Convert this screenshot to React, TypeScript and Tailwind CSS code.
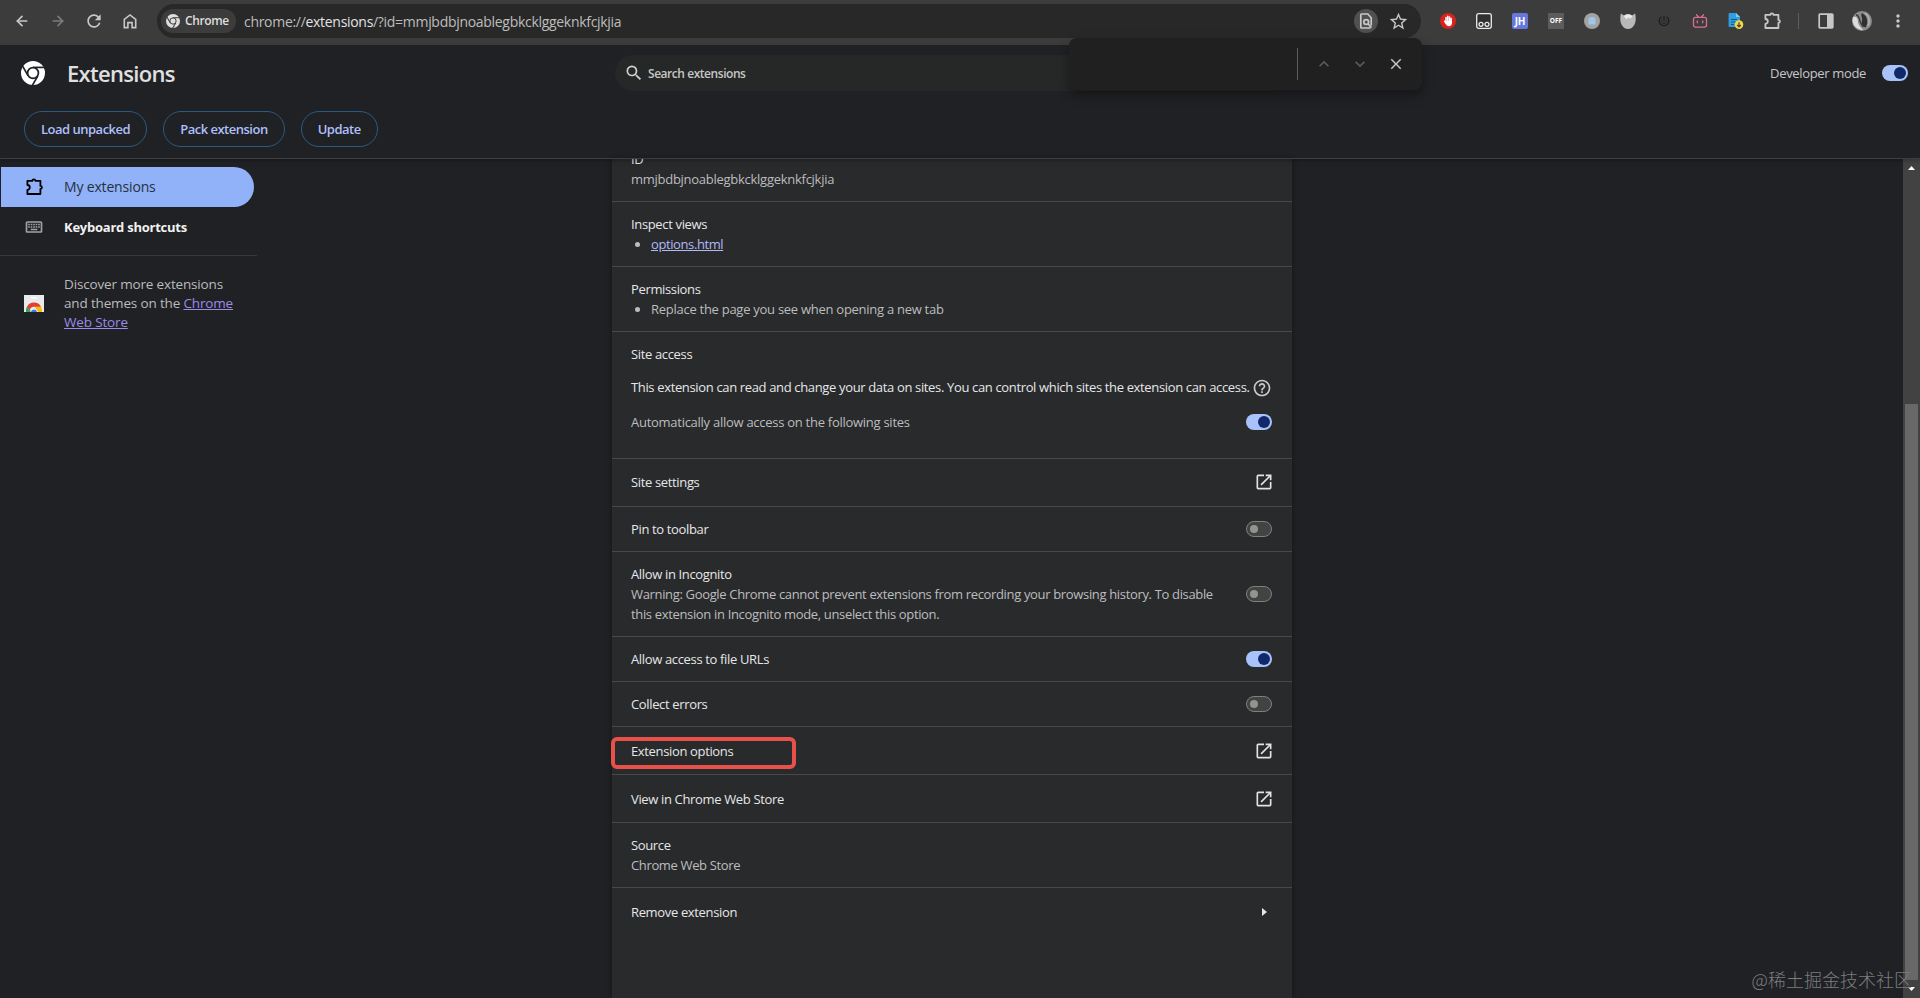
import type { ReactNode } from "react"
import { ArrowLeft, ArrowRight } from "lucide-react"
import {
  MdClose,
  MdHelpOutline,
  MdKeyboardArrowDown,
  MdKeyboardArrowUp,
  MdMoreVert,
  MdOpenInNew,
  MdOutlineKeyboard,
  MdRefresh,
  MdSearch,
  MdStarBorder,
} from "react-icons/md"

// the text colour fills the blades, `gap` is the colour showing between them
function ChromeLogo({ className, gap }: { className: string; gap: string }) {
  return (
    <svg viewBox="0 0 24 24" className={className} fill="none" stroke={gap} strokeWidth="1.7">
      <circle cx="12" cy="12" r="12" fill="currentColor" stroke="none" />
      <path d="M12 6.4H24" />
      <path d="M12 6.4H24" transform="rotate(120 12 12)" />
      <path d="M12 6.4H24" transform="rotate(240 12 12)" />
      <circle cx="12" cy="12" r="5.4" fill="currentColor" />
    </svg>
  )
}

function Toggle({ on = false }: { on?: boolean }) {
  if (on) {
    return (
      <span className="flex h-4 w-[26px] shrink-0 items-center justify-end rounded-full bg-[#a8c3fa] pr-0.5">
        <span className="size-3 rounded-full bg-[#11296b]" />
      </span>
    )
  }
  return (
    <span className="flex h-4 w-[26px] shrink-0 items-center rounded-full border border-[#7e807e] bg-[#424442] pl-[3px]">
      <span className="size-2 rounded-full bg-[#929492]" />
    </span>
  )
}

function PuzzleIcon({ className }: { className?: string }) {
  return (
    <svg viewBox="0 0 20 20" className={className} fill="none" stroke="currentColor" strokeWidth="1.8" strokeLinejoin="round">
      <path d="M3.4 3.8H8.4a1.5 1.5 0 0 1 3 0H16.4V8.9a1.5 1.5 0 0 1 0 3V17H3.4V12.8a2.4 2.4 0 0 0 0-4.8Z" />
    </svg>
  )
}

function HomeIcon() {
  return (
    <svg viewBox="0 0 20 20" className="size-5" fill="none" stroke="currentColor" strokeWidth="1.6">
      <path d="M4.3 8.4 10 3.9l5.7 4.5v8.2h-3.6v-5H7.9v5H4.3Z" />
    </svg>
  )
}

function FindPageIcon() {
  return (
    <svg viewBox="0 0 20 20" className="size-5" fill="none" stroke="currentColor" strokeWidth="1.7">
      <path d="M15.2 14.6V6.8L11.8 3H5.6a.8.8 0 0 0-.8.8v12.4c0 .5.3.8.8.8h9" />
      <circle cx="10.2" cy="11" r="2.4" />
      <path d="m12 12.8 3.4 3.8" />
    </svg>
  )
}

function WebStoreIcon() {
  return (
    <svg viewBox="0 0 20 17" className="h-[17px] w-5 shrink-0">
      <rect width="20" height="17" fill="#e8eaed" />
      <rect x="7" y="2" width="6" height="1.4" rx=".7" fill="#fff" />
      <path d="M2 17a8 8 0 0 1 1.4-6L7.5 17Z" fill="#34a853" />
      <path d="M18 17a8 8 0 0 0-1.2-5.4H10.5L14 17Z" fill="#fbbc04" />
      <path d="M3 11.7a8 8 0 0 1 14 0H10a4.5 4.5 0 0 0-4.3 3.6Z" fill="#e2412f" />
      <path d="M6.2 17a3.9 3.9 0 0 1 7.6 0Z" fill="#fff" />
      <path d="M6.9 17a3.2 3.2 0 0 1 6.2 0Z" fill="#3b78e7" />
    </svg>
  )
}

function ExtensionIcons() {
  return (
    <div className="flex items-center gap-5 text-[#c7c7c7]">
      <svg viewBox="0 0 16 16" className="size-4">
        <circle cx="8" cy="8" r="8" fill="#d8221c" />
        <path d="M6 8.5V4.4M7.8 8V3.2M9.6 8V4M11.2 9V5.6M6 10 4.6 8.2" stroke="#fff" strokeWidth="1.5" strokeLinecap="round" />
        <path d="M5.2 8H12v2c0 2-1.3 3.2-3 3.2-2 0-3-1.4-3.8-3.2Z" fill="#fff" />
      </svg>
      <svg viewBox="0 0 16 16" className="size-4" fill="#303030" stroke="#ececec" strokeWidth="1.3">
        <rect x=".7" y=".7" width="14.6" height="14.6" rx="2" />
        <circle cx="5" cy="11.3" r="2" />
        <circle cx="11" cy="11.3" r="2" />
      </svg>
      <span className="flex size-4 items-center justify-center rounded-[2px] bg-[#6677dd] text-[10px] font-bold tracking-[-0.2px] text-white">JH</span>
      <span className="flex size-4 items-center justify-center bg-[#5c5c5c] text-[6.5px] font-bold text-white">OFF</span>
      <svg viewBox="0 0 16 16" className="size-4">
        <circle cx="8" cy="8" r="8" fill="#a3a3a3" />
        <path d="M4.5 5.5 8 3.8l3.5 1.7V11.5h-7Z" fill="#9cc8ec" />
      </svg>
      <svg viewBox="0 0 16 16" className="size-4">
        <path d="M.8.5 4 2.4C6.5.8 9.5.8 12 2.4L15.2.5C16 5 16 8.5 14.5 11.5 13 14.5 10.5 16 8 16s-5-1.5-6.5-4.5C0 8.500 0 5 .8.5Z" fill="#b9b9b9" />
        <path d="M4 3.5C5 .8 10.5.4 12.5 3.5L10.5 5.5 8.5 4.4 6.5 6.2Z" fill="#e9e9e9" />
      </svg>
      <svg viewBox="0 0 16 16" className="size-4" fill="none" stroke="#1b1b1b" strokeWidth="1.2" strokeLinecap="round">
        <path d="M5 4.2a4.8 4.8 0 1 0 6 0M8 3V7" />
        <path d="M6 7.5a2.2 2.2 0 1 0 4 0" strokeWidth=".7" />
      </svg>
      <svg viewBox="0 0 16 16" className="size-4" fill="none" stroke="#dd6c94" strokeWidth="1.3" strokeLinecap="round">
        <rect x="1.5" y="4.3" width="13" height="9.8" rx="2" />
        <path d="M4.5 1.8 6.5 4M11.5 1.8 9.5 4M5.3 8v1.8M10.7 8v1.8" />
      </svg>
      <svg viewBox="0 0 16 16" className="size-4 overflow-visible">
        <path d="M1.6 0H8l4 4v10H1.6A1 1 0 0 1 .6 13V1a1 1 0 0 1 1-1Z" fill="#2f9fe0" />
        <path d="M8 0l4 4H8Z" fill="#82cbf3" />
        <path d="M3 6.5h6M3 9h5M3 11.5h3" stroke="#17568c" />
        <circle cx="11" cy="11.6" r="4.3" fill="#f0d848" />
        <path d="M11 9.2v4.4M9.2 12l1.8 1.8 1.8-1.8" fill="none" stroke="#4a4420" strokeWidth="1.2" />
      </svg>
    </div>
  )
}

function BrowserToolbar() {
  return (
    <div className="flex h-[45px] items-start bg-[#3c3c3c] text-[#c7c7c7]">
      <div className="flex h-[42px] w-[157px] shrink-0 items-center gap-4 pl-3">
        <ArrowLeft className="size-5 p-[2px]" strokeWidth={2.6} />
        <ArrowRight className="size-5 p-[2px] text-[#7c7c7c]" strokeWidth={2.6} />
        <MdRefresh className="size-5" />
        <HomeIcon />
      </div>
      <div className="mt-1 flex h-[34px] w-[1264px] shrink-0 items-center rounded-full bg-[#282828] pr-3 pl-1">
        <div className="flex h-6 w-[75px] items-center gap-[5px] rounded-full bg-[#3c3c3c] pl-[5px]">
          <ChromeLogo className="size-3.5 text-[#dedede]" gap="#3c3c3c" />
          <span className="text-xs font-semibold tracking-[-0.4px] text-[#dedede]">Chrome</span>
        </div>
        <span className="ml-2 flex-1 text-[14px] tracking-[-0.3px] text-[#bdbdbd]">
          chrome://<span className="text-[#e3e3e3]">extensions</span>/?id=mmjbdbjnoablegbkcklggeknkfcjkjia
        </span>
        <span className="mr-[10px] flex size-6 items-center justify-center rounded-full bg-[#505050]">
          <FindPageIcon />
        </span>
        <MdStarBorder className="size-[21px]" />
      </div>
      <div className="flex h-[42px] items-center pl-[19px]">
        <ExtensionIcons />
        <PuzzleIcon className="ml-[18px] size-5" />
        <span className="ml-4 h-4 w-px bg-[#5e5e5e]" />
        <svg viewBox="0 0 16 16" className="ml-[19px] size-4">
          <rect x="1.2" y="1.2" width="13.6" height="13.6" rx=".8" fill="none" stroke="currentColor" strokeWidth="1.7" />
          <path d="M9 1h6v14H9Z" fill="currentColor" />
        </svg>
        <svg viewBox="0 0 20 20" className="ml-[18px] size-5">
          <circle cx="10" cy="10" r="10" fill="#8c8c8c" />
          <path d="M10 2a10 10 0 0 1 4 14C12 17 9 14 10 10S8 5 10 2Z" fill="#2f2f2f" />
          <path d="M1 6c4-1 5 2 5 5s3 5 5 8A10 10 0 0 1 1 6Z" fill="#dcdcdc" />
          <path d="M4 4c3 0 3 3 4 6s2 4 3 6" stroke="#3a3a3a" strokeWidth="1.4" fill="none" />
          <path d="M13 2c4 3 5 8 3 13" stroke="#b4b4b4" strokeWidth="1.5" fill="none" />
        </svg>
        <MdMoreVert className="ml-4 size-5" />
      </div>
    </div>
  )
}

function FindBar() {
  return (
    <div className="absolute top-[38px] left-[1069px] z-20 flex h-[52px] w-[353px] items-center justify-end rounded-lg bg-[#202020] pr-[17px] text-[#c4c4c4] shadow-[0_5px_12px_rgba(0,0,0,0.35)]">
      <span className="mr-4 h-8 w-px bg-[#5a5a5a]" />
      <MdKeyboardArrowUp className="mr-4 size-5 text-[#5c5c5c]" />
      <MdKeyboardArrowDown className="mr-[17px] size-5 text-[#5c5c5c]" />
      <MdClose className="size-[18px]" />
    </div>
  )
}

function OutlineButton({ children }: { children: ReactNode }) {
  return (
    <button className="h-9 rounded-full border border-[#2b5a84] px-4 pt-0.5 text-[13px] font-semibold tracking-[-0.5px] text-[#aebffa]">
      {children}
    </button>
  )
}

function Header() {
  return (
    <header className="relative z-10 h-[114px] border-b border-[#3d3e40] shadow-[0_2px_4px_rgba(0,0,0,0.25)]">
      <div className="flex h-14 items-center">
        <div className="flex w-[615px] items-center pl-[21px]">
          <ChromeLogo className="size-6 text-white" gap="#202124" />
          <h1 className="ml-[22px] text-[22px] font-semibold tracking-[-0.7px] text-[#e0e0e0]">Extensions</h1>
        </div>
        <div className="flex h-9 w-[677px] items-center rounded-full bg-[#262727] pl-[9px]">
          <MdSearch className="size-5 text-[#d0d0d0]" />
          <span className="ml-1 pt-0.5 text-xs font-semibold tracking-[-0.45px] text-[#c6c7c7]">Search extensions</span>
        </div>
        <div className="flex flex-1 items-center justify-end pr-3">
          <span className="mr-4 pt-0.5 text-[13px] tracking-[-0.34px] text-[#c5c6c8]">Developer mode</span>
          <Toggle on />
        </div>
      </div>
      <div className="flex gap-4 pt-[10px] pl-6">
        <OutlineButton>Load unpacked</OutlineButton>
        <OutlineButton>Pack extension</OutlineButton>
        <OutlineButton>Update</OutlineButton>
      </div>
    </header>
  )
}

function Sidebar() {
  return (
    <nav className="w-[257px] pt-2">
      <div className="ml-px flex h-10 w-[253px] items-center rounded-r-full bg-[#91b2f8] pl-[23px] text-[#26303f]">
        <PuzzleIcon className="size-5 text-black" />
        <span className="ml-5 text-sm tracking-[-0.17px]">My extensions</span>
      </div>
      <div className="flex h-10 items-center pl-6">
        <MdOutlineKeyboard className="size-5 text-[#a0a2a5]" />
        <span className="ml-5 pt-0.5 text-[13px] font-bold tracking-[-0.24px] text-[#f1f1f1]">Keyboard shortcuts</span>
      </div>
      <div className="mt-2 border-t border-[#37383a]" />
      <div className="mt-[19px] flex items-center pl-6">
        <WebStoreIcon />
        <p className="ml-5 w-[174px] text-[13.5px] leading-[19px] tracking-[-0.16px] text-[#b9bbbd]">
          Discover more extensions and themes on the <a className="text-[#9a8be6] underline">Chrome Web Store</a>
        </p>
      </div>
    </nav>
  )
}

function Label({ children }: { children: ReactNode }) {
  return <div className="font-medium tracking-[-0.35px] text-[#e6e7e8]">{children}</div>
}

function Row({ label, className, children }: { label: string; className: string; children?: ReactNode }) {
  return (
    <div className={`flex items-center justify-between border-t border-[#47484a] pr-5 pl-[19px] ${className}`}>
      <Label>{label}</Label>
      {children}
    </div>
  )
}

function DetailsCard() {
  return (
    <main className="overflow-hidden bg-[#292a2b] text-[13px] leading-5 tracking-[-0.27px] text-[#bcbdbf] shadow-[0_0_5px_rgba(0,0,0,0.4)]">
      <div className="-mt-[10px] pr-5 pb-3 pl-[19px]">
        <Label>ID</Label>
        <div>mmjbdbjnoablegbkcklggeknkfcjkjia</div>
      </div>
      <div className="border-t border-[#47484a] py-3 pr-5 pl-[19px]">
        <Label>Inspect views</Label>
        <ul className="list-disc pl-5">
          <li><a className="tracking-[-0.4px] text-[#b3b9f6] underline">options.html</a></li>
        </ul>
      </div>
      <div className="border-t border-[#47484a] py-3 pr-5 pl-[19px]">
        <Label>Permissions</Label>
        <ul className="list-disc pl-5">
          <li>Replace the page you see when opening a new tab</li>
        </ul>
      </div>
      <div className="border-t border-[#47484a] pt-3 pr-5 pb-[26px] pl-[19px]">
        <Label>Site access</Label>
        <div className="mt-[11px] flex h-6 items-center gap-0.5 whitespace-nowrap">
          <Label>This extension can read and change your data on sites. You can control which sites the extension can access.</Label>
          <MdHelpOutline className="mt-0.5 size-5 shrink-0 text-[#c8c9ca]" />
        </div>
        <div className="mt-[13px] flex items-center justify-between">
          <span>Automatically allow access on the following sites</span>
          <Toggle on />
        </div>
      </div>
      <Row label="Site settings" className="h-12 pb-px">
        <MdOpenInNew className="-mr-0.5 size-5 text-[#e3e3e3]" />
      </Row>
      <Row label="Pin to toolbar" className="h-[45px]">
        <Toggle />
      </Row>
      <div className="flex items-center justify-between border-t border-[#47484a] py-3 pr-5 pl-[19px]">
        <div className="w-[590px]">
          <Label>Allow in Incognito</Label>
          <p className="tracking-[-0.34px]">
            Warning: Google Chrome cannot prevent extensions from recording your browsing history. To disable this extension in Incognito mode, unselect this option.
          </p>
        </div>
        <Toggle />
      </div>
      <Row label="Allow access to file URLs" className="h-[45px]">
        <Toggle on />
      </Row>
      <Row label="Collect errors" className="h-[45px]">
        <Toggle />
      </Row>
      <Row label="Extension options" className="h-12">
        <MdOpenInNew className="-mr-0.5 size-5 text-[#e3e3e3]" />
      </Row>
      <Row label="View in Chrome Web Store" className="h-12">
        <MdOpenInNew className="-mr-0.5 size-5 text-[#e3e3e3]" />
      </Row>
      <div className="border-t border-[#47484a] py-3 pr-5 pl-[19px]">
        <Label>Source</Label>
        <div className="tracking-[-0.36px]">Chrome Web Store</div>
      </div>
      <Row label="Remove extension" className="h-[49px]">
        <svg viewBox="0 0 5 8" className="mr-[5px] h-2 w-[5px]">
          <path d="M0 0 5 4 0 8Z" fill="#e6e6e6" />
        </svg>
      </Row>
    </main>
  )
}

function Scrollbar() {
  return (
    <div className="flex flex-col items-center bg-[#424242]">
      <svg viewBox="0 0 7 4" className="mt-[7px] h-1 w-[7px]">
        <path d="M3.5 0 7 4H0Z" fill="#fff" />
      </svg>
      <div className="mt-[234px] h-[576px] w-[13px] bg-[#686868]" />
      <svg viewBox="0 0 7 4" className="mt-[7px] h-1 w-[7px]">
        <path d="M0 0h7L3.5 4Z" fill="#fff" />
      </svg>
    </div>
  )
}

export default function App() {
  return (
    <div className="relative flex h-[998px] w-[1920px] flex-col overflow-hidden bg-[#202124] font-['Open_Sans','Noto_Sans_CJK_SC',sans-serif]">
      <BrowserToolbar />
      <Header />
      <div className="grid min-h-0 flex-1 grid-cols-[612px_680px_1fr_17px]">
        <Sidebar />
        <DetailsCard />
        <div />
        <Scrollbar />
      </div>
      <FindBar />
      <div className="absolute top-[737px] left-[611px] h-8 w-[185px] rounded-md border-4 border-[#e8504a]" />
      <div className="absolute right-2 bottom-[7px] font-['Noto_Sans_CJK_SC',sans-serif] text-[18px] leading-6 font-light text-[#7c7d7f]">
        @稀土掘金技术社区
      </div>
    </div>
  )
}
